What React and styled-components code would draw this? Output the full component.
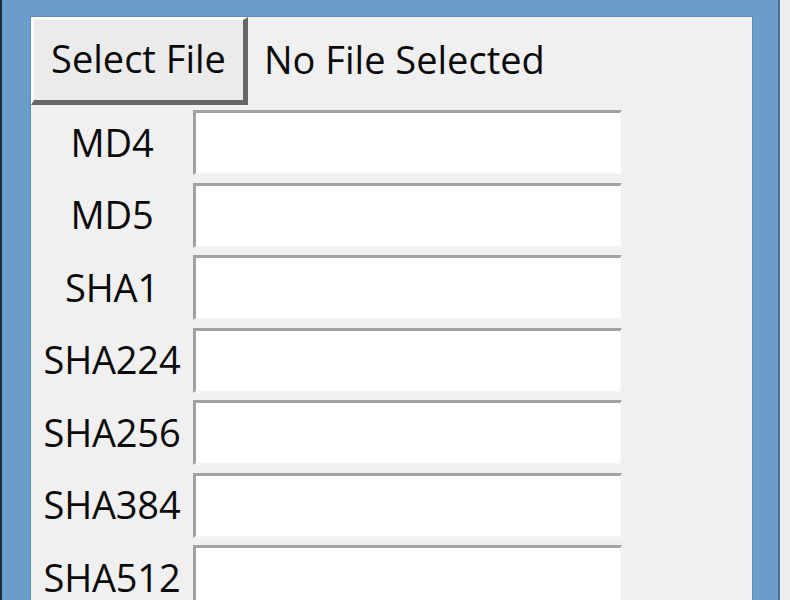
import React from 'react';
import styled, { createGlobalStyle } from 'styled-components';

const GlobalStyle = createGlobalStyle`
  html, body {
    margin: 0;
    padding: 0;
    background: #eeeeee;
    overflow: hidden;
  }
`;

const Screen = styled.div`
  display: flex;
  width: 790px;
  height: 600px;
`;

const WindowFrame = styled.div`
  width: 721px;
  height: 600px;
  padding: 17px 26px 0 29px;
  background: #6b9dca;
  border-left: 2px solid #1f2a36;
  border-right: 2px solid #4d6f90;
  box-sizing: content-box;
`;

const Panel = styled.div`
  height: 100%;
  background: #f0f0f0;
  box-shadow: 0 0 0 1px #5d8cbb;
  font-family: "Open Sans", "Noto Sans", sans-serif;
  color: #0a0a0a;
`;

const TopRow = styled.div`
  display: flex;
  align-items: center;
`;

const Button = styled.button`
  width: 217px;
  height: 88px;
  padding: 0 0 4px;
  margin: 0;
  background: #ebebeb;
  border-style: solid;
  border-width: 3px 5px 5px 3px;
  border-color: #ffffff #666666 #666666 #ffffff;
  font-family: inherit;
  font-size: 38px;
  color: inherit;
`;

const Status = styled.span`
  margin-left: 16px;
  font-size: 38px;
  line-height: 1;
  padding-bottom: 4px;
`;

const HashGrid = styled.div`
  display: grid;
  grid-template-columns: 162px 429px;
  grid-auto-rows: 65px;
  row-gap: 7.5px;
  margin-top: 5px;
`;

const Label = styled.div`
  display: flex;
  align-items: center;
  justify-content: center;
  font-size: 38px;
  letter-spacing: -0.2px;
  padding-bottom: 2px;
`;

const Entry = styled.input`
  box-sizing: border-box;
  width: 100%;
  height: 100%;
  margin: 0;
  background: #ffffff;
  border-style: solid;
  border-width: 3px 2px 2px 3px;
  border-color: #a2a2a2 #f4f4f4 #f4f4f4 #a2a2a2;
  outline: none;
  font-family: inherit;
  font-size: 30px;
`;

const hashes = ['MD4', 'MD5', 'SHA1', 'SHA224', 'SHA256', 'SHA384', 'SHA512'];

export default function App() {
  return (
    <>
      <GlobalStyle />
      <Screen>
        <WindowFrame>
          <Panel>
            <TopRow>
              <Button>Select File</Button>
              <Status>No File Selected</Status>
            </TopRow>
            <HashGrid>
              {hashes.map((name) => (
                <React.Fragment key={name}>
                  <Label>{name}</Label>
                  <Entry readOnly />
                </React.Fragment>
              ))}
            </HashGrid>
          </Panel>
        </WindowFrame>
      </Screen>
    </>
  );
}
